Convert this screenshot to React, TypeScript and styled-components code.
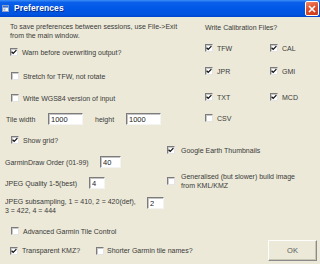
import React, { FC, ReactNode } from 'react';
import styled, { createGlobalStyle } from 'styled-components';

const GlobalStyle = createGlobalStyle`
  html, body {
    margin: 0;
    padding: 0;
    background: #ece9d8;
  }
  body {
    font-family: "Liberation Sans", Arial, sans-serif;
  }
`;

const Window = styled.div`
  width: 320px;
  height: 264px;
  display: flex;
  flex-direction: column;
  overflow: hidden;
  background: #ece9d8;
  color: #3a3a3a;
  font-size: 7px;
  line-height: 9px;
`;

const TitleBar = styled.div`
  height: 17px;
  flex: none;
  display: flex;
  align-items: center;
  padding: 0 1px 0 2px;
  background: linear-gradient(
    180deg,
    #3d8ff7 0%,
    #0b60ea 14%,
    #0058e6 50%,
    #0053df 86%,
    #0045cc 100%
  );
`;

const TitleText = styled.span`
  margin-left: 5px;
  color: #fff;
  font-weight: bold;
  font-size: 8.5px;
  letter-spacing: 0.1px;
  text-shadow: 1px 1px 0 #0a2a8a;
  flex: 1;
`;

const CloseButton = styled.div`
  width: 14px;
  height: 15px;
  box-sizing: border-box;
  border: 1px solid #fff;
  border-radius: 2px;
  background: linear-gradient(160deg, #f08a6a 0%, #e0502c 45%, #c83c1c 100%);
  display: flex;
  align-items: center;
  justify-content: center;
`;

const Body = styled.div`
  flex: 1;
  display: flex;
  flex-direction: column;
`;

const Section = styled.div`
  display: flex;
  align-items: flex-start;
`;

const Column = styled.div<{ $width?: number; $left?: number }>`
  display: flex;
  flex-direction: column;
  width: ${(p) => (p.$width ? `${p.$width}px` : 'auto')};
  margin-left: ${(p) => p.$left ?? 0}px;
  flex: none;
`;

const Text = styled.div<{ $top?: number; $left?: number }>`
  margin-top: ${(p) => p.$top ?? 0}px;
  margin-left: ${(p) => p.$left ?? 0}px;
  white-space: nowrap;
`;

const CheckItem = styled.div<{ $top?: number; $left?: number; $gap?: number; $width?: number }>`
  display: flex;
  align-items: center;
  min-height: 10px;
  margin-top: ${(p) => p.$top ?? 0}px;
  margin-left: ${(p) => p.$left ?? 0}px;
  gap: ${(p) => p.$gap ?? 4}px;
  width: ${(p) => (p.$width ? `${p.$width}px` : 'auto')};
  flex: none;
`;

const Box = styled.span`
  width: 8px;
  height: 8px;
  box-sizing: border-box;
  flex: none;
  background: #fff;
  border-style: solid;
  border-width: 1px;
  border-color: #7c7c7c #e4e4e4 #e4e4e4 #7c7c7c;
  box-shadow: inset 1px 1px 0 #c8c8c8;
  display: flex;
  align-items: center;
  justify-content: center;
`;

const Label = styled.span`
  white-space: nowrap;
`;

const CalRow = styled.div<{ $top: number }>`
  display: grid;
  grid-template-columns: 65px 65px;
  margin-top: ${(p) => p.$top}px;
`;

const FieldRow = styled.div<{ $top: number; $left?: number }>`
  display: flex;
  align-items: center;
  margin-top: ${(p) => p.$top}px;
  padding-left: ${(p) => p.$left ?? 5}px;
`;

const FieldLabel = styled.span<{ $width: number; $left?: number }>`
  width: ${(p) => p.$width}px;
  margin-left: ${(p) => p.$left ?? 0}px;
  flex: none;
  white-space: nowrap;
`;

const TextBox = styled.input<{ $width: number; $top?: number }>`
  width: ${(p) => p.$width}px;
  height: 12px;
  margin: ${(p) => p.$top ?? 0}px 0 0 0;
  box-sizing: border-box;
  padding: 0 0 0 2px;
  flex: none;
  background: #fff;
  border-style: solid;
  border-width: 1px;
  border-color: #7c7c7c #f4f4f4 #f4f4f4 #7c7c7c;
  box-shadow: inset 1px 1px 0 #c4c4c4;
  font-family: "Liberation Sans", Arial, sans-serif;
  font-size: 7.5px;
  color: #222;
  outline: none;
`;

const Footer = styled.div`
  display: flex;
  align-items: center;
  margin-top: 4px;
  padding: 0 3px 0 10px;
`;

const OkButton = styled.div`
  margin-left: auto;
  width: 49px;
  height: 21px;
  box-sizing: border-box;
  border-style: solid;
  border-width: 1px;
  border-color: #fdfdfd #8a8a8a #8a8a8a #fdfdfd;
  box-shadow: inset -1px -1px 0 #c9c6b8;
  display: flex;
  align-items: center;
  justify-content: center;
  color: #5a5a5a;
  font-size: 7.5px;
`;

const Check: FC<{ checked?: boolean; children: ReactNode; top?: number; left?: number; gap?: number; width?: number }> = ({
  checked,
  children,
  top,
  left,
  gap,
  width,
}) => (
  <CheckItem $top={top} $left={left} $gap={gap} $width={width}>
    <Box>
      {checked ? (
        <svg width="6" height="6" viewBox="0 0 6 6">
          <path d="M0.6 2.8 L2.2 4.4 L5.4 1.1" fill="none" stroke="#111" strokeWidth="1.3" />
        </svg>
      ) : null}
    </Box>
    <Label>{children}</Label>
  </CheckItem>
);

const TitleIcon = () => (
  <svg width="7" height="7" viewBox="0 0 7 7">
    <rect x="0.5" y="0.5" width="6" height="6" fill="#f4f4f4" stroke="#8aa0c0" />
    <rect x="1" y="1" width="5" height="1.6" fill="#3a6fd0" />
    <rect x="1.5" y="3.5" width="2" height="2" fill="#9fb4d6" />
  </svg>
);

export default function App() {
  return (
    <Window>
      <GlobalStyle />
      <TitleBar>
        <TitleIcon />
        <TitleText>Preferences</TitleText>
        <CloseButton>
          <svg width="8" height="8" viewBox="0 0 8 8">
            <path d="M1 1 L7 7 M7 1 L1 7" stroke="#fff" strokeWidth="1.6" />
          </svg>
        </CloseButton>
      </TitleBar>
      <Body>
        <Section>
          <Column $width={200}>
            <Text $top={5} $left={10}>
              To save preferences between sessions, use File-&gt;Exit
              <br />
              from the main window.
            </Text>
            <Check checked top={7} left={10}>
              Warn before overwriting output?
            </Check>
            <Check top={14} left={11}>
              Stretch for TFW, not rotate
            </Check>
            <Check top={12} left={11}>
              Write WGS84 version of input
            </Check>
            <FieldRow $top={10} $left={6}>
              <FieldLabel $width={42}>Tile width</FieldLabel>
              <TextBox $width={35} defaultValue="1000" readOnly />
              <FieldLabel $width={31} $left={12}>
                height
              </FieldLabel>
              <TextBox $width={35} defaultValue="1000" readOnly />
            </FieldRow>
          </Column>
          <Column $left={5}>
            <Text $top={6}>Write Calibration Files?</Text>
            <CalRow $top={11}>
              <Check checked>TFW</Check>
              <Check checked>CAL</Check>
            </CalRow>
            <CalRow $top={13}>
              <Check checked>JPR</Check>
              <Check checked>GMI</Check>
            </CalRow>
            <CalRow $top={16}>
              <Check checked>TXT</Check>
              <Check checked>MCD</Check>
            </CalRow>
            <CalRow $top={11}>
              <Check>CSV</Check>
            </CalRow>
          </Column>
        </Section>
        <Section>
          <Column $width={165}>
            <Check checked top={10} left={11}>
              Show grid?
            </Check>
            <FieldRow $top={11}>
              <FieldLabel $width={95}>GarminDraw Order (01-99)</FieldLabel>
              <TextBox $width={21} defaultValue="40" readOnly />
            </FieldRow>
            <FieldRow $top={9}>
              <FieldLabel $width={84}>JPEG Quality 1-5(best)</FieldLabel>
              <TextBox $width={16} defaultValue="4" readOnly />
            </FieldRow>
            <FieldRow $top={8}>
              <FieldLabel $width={142}>
                JPEG subsampling, 1 = 410, 2 = 420(def),
                <br />3 = 422, 4 = 444
              </FieldLabel>
              <TextBox $width={17} $top={-6} defaultValue="2" readOnly />
            </FieldRow>
            <Check top={11} left={11}>
              Advanced Garmin Tile Control
            </Check>
          </Column>
          <Column $left={2}>
            <Check checked top={20} gap={6}>
              Google Earth Thumbnails
            </Check>
            <Check top={17} gap={6}>
              Generalised (but slower) build image
              <br />
              from KML/KMZ
            </Check>
          </Column>
        </Section>
        <Footer>
          <Check checked width={86}>
            Transparent KMZ?
          </Check>
          <Check gap={3}>Shorter Garmin tile names?</Check>
          <OkButton>OK</OkButton>
        </Footer>
      </Body>
    </Window>
  );
}
